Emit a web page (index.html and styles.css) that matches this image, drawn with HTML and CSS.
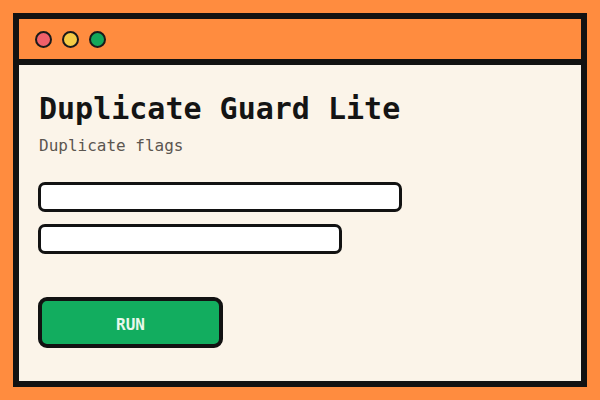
FILE: index.html
```html
<!DOCTYPE html>
<html>
<head>
<meta charset="utf-8">
<link rel="stylesheet" href="styles.css">
</head>
<body>
<div class="frame">
  <div class="titlebar">
    <span class="dot dot-red"></span>
    <span class="dot dot-yellow"></span>
    <span class="dot dot-green"></span>
  </div>
  <div class="content">
    <h1 class="title">Duplicate Guard Lite</h1>
    <p class="subtitle">Duplicate flags</p>
    <div class="bars">
      <div class="bar bar-long"></div>
      <div class="bar bar-short"></div>
    </div>
    <button class="run">RUN</button>
  </div>
</div>
</body>
</html>
```

FILE: styles.css
```css
html, body {
  margin: 0;
  padding: 0;
}
body {
  width: 600px;
  height: 400px;
  background: #ff8c3f;
  padding: 13px;
  box-sizing: border-box;
  font-family: "DejaVu Sans Mono", monospace;
}
.frame {
  width: 574px;
  height: 374px;
  box-sizing: border-box;
  border: 6px solid #121212;
  background: #fbf4e9;
  display: flex;
  flex-direction: column;
}
.titlebar {
  height: 46px;
  box-sizing: border-box;
  background: #ff8c3f;
  border-bottom: 6px solid #121212;
  display: flex;
  align-items: center;
  gap: 10px;
  padding: 1px 0 0 16px;
}
.dot {
  width: 17px;
  height: 17px;
  box-sizing: border-box;
  border: 2.5px solid #1a1a1a;
  border-radius: 50%;
}
.dot-red { background: #f0606a; }
.dot-yellow { background: #f5cb45; }
.dot-green { background: #14a85a; }
.content {
  padding: 26px 0 0 19px;
  display: flex;
  flex-direction: column;
  align-items: flex-start;
}
.title {
  margin: 0 0 0 1px;
  font-size: 30px;
  line-height: 36px;
  font-weight: bold;
  color: #141414;
}
.subtitle {
  margin: 9px 0 0 1px;
  font-size: 16px;
  line-height: 20px;
  color: #5b5650;
}
.bars {
  margin-top: 26px;
  display: flex;
  flex-direction: column;
  gap: 12px;
}
.bar {
  height: 30px;
  box-sizing: border-box;
  border: 3.5px solid #121212;
  border-radius: 7px;
  background: #ffffff;
}
.bar-long { width: 364px; }
.bar-short { width: 304px; }
.run {
  margin-top: 43px;
  width: 185px;
  height: 51px;
  box-sizing: border-box;
  border: 4px solid #121212;
  border-radius: 9px;
  background: #12ad5f;
  color: #e8f8ec;
  font-family: "DejaVu Sans Mono", monospace;
  font-weight: bold;
  font-size: 16px;
  padding: 4px 0 0 0;
}
```
